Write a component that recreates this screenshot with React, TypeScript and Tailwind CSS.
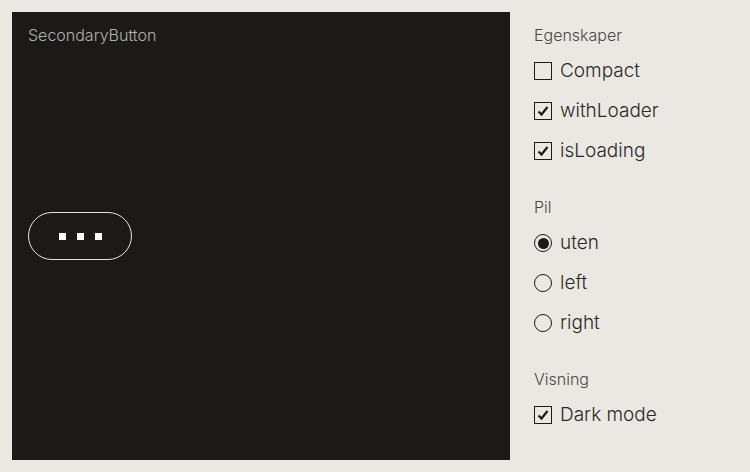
import { useState } from "react";

const Checkbox: React.FC<{ label: string; checked: boolean; onToggle: () => void }> = ({
  label,
  checked,
  onToggle,
}) => {
  return (
    <label className="flex h-10 cursor-pointer items-center gap-2" onClick={onToggle}>
      <span className="flex h-[18px] w-[18px] items-center justify-center border-[1.5px] border-[#1b1a18]">
        {checked ? (
          <svg width="12" height="12" viewBox="0 0 12 12">
            <path d="M1.5 6.5 L4.5 9.5 L10.5 2" fill="none" stroke="#1b1a18" strokeWidth="2.2" />
          </svg>
        ) : null}
      </span>
      <span className="text-[19px] font-light text-[#2a2826]">{label}</span>
    </label>
  );
};

const Radio: React.FC<{ label: string; checked: boolean; onSelect: () => void }> = ({
  label,
  checked,
  onSelect,
}) => {
  return (
    <label className="flex h-10 cursor-pointer items-center gap-2" onClick={onSelect}>
      <span className="flex h-[18px] w-[18px] items-center justify-center rounded-full border-[1.5px] border-[#1b1a18]">
        {checked ? <span className="h-[11px] w-[11px] rounded-full bg-[#1b1a18]" /> : null}
      </span>
      <span className="text-[19px] font-light text-[#2a2826]">{label}</span>
    </label>
  );
};

const Heading: React.FC<{ children: React.ReactNode }> = ({ children }) => (
  <h3 className="mb-1 text-base font-light leading-6 text-[#4a4744]">{children}</h3>
);

const App: React.FC = () => {
  const [compact, setCompact] = useState(false);
  const [withLoader, setWithLoader] = useState(true);
  const [isLoading, setIsLoading] = useState(true);
  const [pil, setPil] = useState("uten");
  const [dark, setDark] = useState(true);

  return (
    <div
      className="flex min-h-[472px] gap-6 bg-[#ebe8e4] p-3"
      style={{ fontFamily: "Inter, 'Liberation Sans', sans-serif" }}
    >
      <div className="flex h-[448px] w-[498px] flex-col bg-[#1b1a18] p-4">
        <div className="text-base font-light leading-[14px] text-[#b5b2ad]">SecondaryButton</div>
        <div className="flex flex-1 items-center pb-[14px]">
          <button className="flex h-12 w-[104px] items-center justify-center gap-[11px] rounded-full border border-[#e9e6e1]">
            <span className="h-[7px] w-[7px] bg-white" />
            <span className="h-[7px] w-[7px] bg-white" />
            <span className="h-[7px] w-[7px] bg-white" />
          </button>
        </div>
      </div>

      <div className="flex flex-col pt-[11px]">
        <Heading>Egenskaper</Heading>
        <Checkbox label="Compact" checked={compact} onToggle={() => setCompact(!compact)} />
        <Checkbox label="withLoader" checked={withLoader} onToggle={() => setWithLoader(!withLoader)} />
        <Checkbox label="isLoading" checked={isLoading} onToggle={() => setIsLoading(!isLoading)} />

        <div className="mt-6">
          <Heading>Pil</Heading>
          <Radio label="uten" checked={pil === "uten"} onSelect={() => setPil("uten")} />
          <Radio label="left" checked={pil === "left"} onSelect={() => setPil("left")} />
          <Radio label="right" checked={pil === "right"} onSelect={() => setPil("right")} />
        </div>

        <div className="mt-6">
          <Heading>Visning</Heading>
          <Checkbox label="Dark mode" checked={dark} onToggle={() => setDark(!dark)} />
        </div>
      </div>
    </div>
  );
};

export default App;
